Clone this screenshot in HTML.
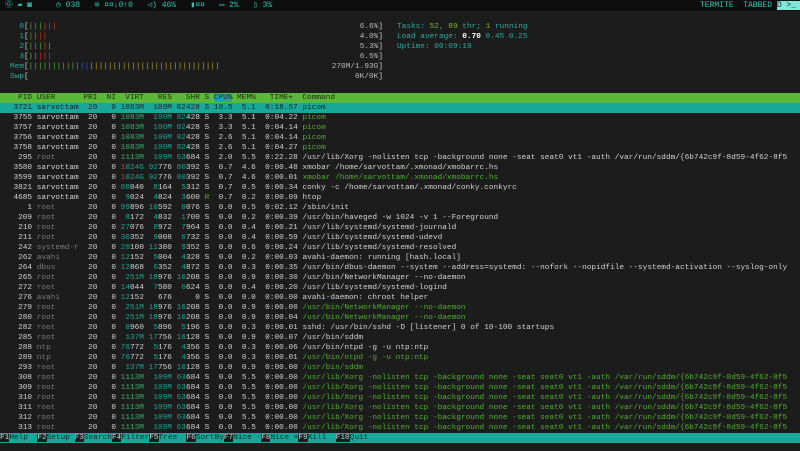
<!DOCTYPE html>
<html><head><meta charset="utf-8"><style>
*{margin:0;padding:0}
body{width:800px;height:451px;background:#1c1c1c;overflow:hidden;position:relative;font-family:"Liberation Mono","DejaVu Sans Mono",monospace;font-size:7.77px;color:#d2d2d2}
.l{position:absolute;white-space:pre;height:10px;line-height:10px}
.m{width:373px}
.m .v2{position:absolute;right:0;top:0;color:#bbb}
.top{position:absolute;left:0;top:0;width:800px;height:11px;background:#0e0e0e;color:#2fc4b2;font-size:8px;line-height:11px;white-space:pre}
.d{color:#7a7a7a}.t{color:#1aa596}.g{color:#3aae6a}.c{color:#4fae2e}.r{color:#d03a2a}.cy{color:#2aa8a0}
.w{color:#fff;font-weight:bold}.y{color:#b8a02a}.b{color:#3060d0}.lg{color:#bbb}.gb{color:#7ab82a}
.hdr{left:0;width:800px;background:#5cb83a;color:#1a2a10}
.sel{left:0;width:800px;background:#17a89a;color:#102020}
.fb span.k{color:#d2d2d2}.fb span.v{background:#17a89a;color:#0c2a28}
</style></head><body>
<div class="top"> <span>⓪ ▰ ◙</span>     ◷ 038   ≋ ¤¤↓0↑0   ◁) 46%   ▮¤¤   ▭ 2%   ▯ 3%</div>
<div class="top" style="left:700px;width:100px;background:none;color:#2fc4b2">TERMITE  TABBED <span style="background:#7fe8d8;color:#123">D &gt;_ </span></div>

<div class="l m" style="left:10px;top:22px">  <span class="cy">0</span>[<span class="c">|||</span><span class="r">|||</span><span class="v2">6.6%<span style="color:#d2d2d2">]</span></span></div>
<div class="l m" style="left:10px;top:32px">  <span class="cy">1</span>[<span class="c">||</span><span class="r">||</span><span class="v2">4.0%<span style="color:#d2d2d2">]</span></span></div>
<div class="l m" style="left:10px;top:42px">  <span class="cy">2</span>[<span class="c">|||</span><span class="r">|</span><span class="y">|</span><span class="v2">5.3%<span style="color:#d2d2d2">]</span></span></div>
<div class="l m" style="left:10px;top:52px">  <span class="cy">3</span>[<span class="c">||</span><span class="r">|||</span><span class="v2">6.5%<span style="color:#d2d2d2">]</span></span></div>
<div class="l m" style="left:10px;top:62px"><span class="cy">Mem</span>[<span class="c">|||||||||||</span><span class="b">||</span><span class="y">||||||||||||||||||||||||||||</span><span class="v2">270M/1.93G<span style="color:#d2d2d2">]</span></span></div>
<div class="l m" style="left:10px;top:72px"><span class="cy">Swp</span>[<span class="v2">0K/0K<span style="color:#d2d2d2">]</span></span></div>
<div class="l cy" style="left:397px;top:22px">Tasks: <span class="gb">52</span>, <span class="gb">89</span> thr; <span class="gb">1</span> running</div>
<div class="l cy" style="left:397px;top:32px">Load average: <span class="w">0.70</span> 0.45 0.25</div>
<div class="l cy" style="left:397px;top:42px">Uptime: 00:09:19</div>

<div class="l hdr" style="top:93px"><span style="padding-left:8.8px">  PID USER      PRI  NI  VIRT   RES   SHR S <span style="background:#1aa6b0">CPU%</span> MEM%   TIME+  Command</span></div>
<div class="l sel" style="top:103px"><span style="padding-left:8.8px"> 3721 sarvottam  20   0 1083M  100M 82428 S 10.5  5.1  0:18.57 picom</span></div>
<div style="position:absolute;left:8.8px;top:113px">
<div class="l" style="position:relative"> 3755 sarvottam  20   0 <span class="g">1083M</span>  <span class="t">100M</span> <span class="t">82</span>428 S  3.3  5.1  0:04.22 <span class="c">picom</span></div>
<div class="l" style="position:relative"> 3757 sarvottam  20   0 <span class="g">1083M</span>  <span class="t">100M</span> <span class="t">82</span>428 S  3.3  5.1  0:04.14 <span class="c">picom</span></div>
<div class="l" style="position:relative"> 3756 sarvottam  20   0 <span class="g">1083M</span>  <span class="t">100M</span> <span class="t">82</span>428 S  2.6  5.1  0:04.14 <span class="c">picom</span></div>
<div class="l" style="position:relative"> 3758 sarvottam  20   0 <span class="g">1083M</span>  <span class="t">100M</span> <span class="t">82</span>428 S  2.6  5.1  0:04.27 <span class="c">picom</span></div>
<div class="l" style="position:relative">  295 <span class="d">root     </span>  20   0 <span class="g">1113M</span>  <span class="t">109M</span> <span class="t">63</span>684 S  2.0  5.5  0:22.28 /usr/lib/Xorg -nolisten tcp -background none -seat seat0 vt1 -auth /var/run/sddm/{6b742c9f-8d59-4f62-8f5</div>
<div class="l" style="position:relative"> 3580 sarvottam  20   0 <span class="r">1</span><span class="t">024G</span> <span class="t">92</span>776 <span class="t">80</span>392 S  0.7  4.6  0:00.48 xmobar /home/sarvottam/.xmonad/xmobarrc.hs</div>
<div class="l" style="position:relative"> 3599 sarvottam  20   0 <span class="r">1</span><span class="t">024G</span> <span class="t">92</span>776 <span class="t">80</span>392 S  0.7  4.6  0:00.01 <span class="c">xmobar /home/sarvottam/.xmonad/xmobarrc.hs</span></div>
<div class="l" style="position:relative"> 3821 sarvottam  20   0 <span class="t">68</span>040  <span class="t">8</span>164  <span class="t">5</span>312 S  0.7  0.5  0:00.34 conky -c /home/sarvottam/.xmonad/conky.conkyrc</div>
<div class="l" style="position:relative"> 4685 sarvottam  20   0  <span class="t">9</span>024  <span class="t">4</span>824  <span class="t">3</span>600 <span class="c">R</span>  0.7  0.2  0:00.09 htop</div>
<div class="l" style="position:relative">    1 <span class="d">root     </span>  20   0 <span class="t">99</span>896 <span class="t">10</span>592  <span class="t">8</span>076 S  0.0  0.5  0:02.12 /sbin/init</div>
<div class="l" style="position:relative">  209 <span class="d">root     </span>  20   0  <span class="t">8</span>172  <span class="t">4</span>832  <span class="t">1</span>700 S  0.0  0.2  0:00.39 /usr/bin/haveged -w 1024 -v 1 --Foreground</div>
<div class="l" style="position:relative">  210 <span class="d">root     </span>  20   0 <span class="t">27</span>076  <span class="t">8</span>972  <span class="t">7</span>964 S  0.0  0.4  0:00.21 /usr/lib/systemd/systemd-journald</div>
<div class="l" style="position:relative">  211 <span class="d">root     </span>  20   0 <span class="t">30</span>352  <span class="t">9</span>008  <span class="t">6</span>732 S  0.0  0.4  0:00.59 /usr/lib/systemd/systemd-udevd</div>
<div class="l" style="position:relative">  242 <span class="d">systemd-r</span>  20   0 <span class="t">20</span>100 <span class="t">11</span>380  <span class="t">9</span>352 S  0.0  0.6  0:00.24 /usr/lib/systemd/systemd-resolved</div>
<div class="l" style="position:relative">  262 <span class="d">avahi    </span>  20   0 <span class="t">12</span>152  <span class="t">5</span>004  <span class="t">4</span>328 S  0.0  0.2  0:00.03 avahi-daemon: running [hash.local]</div>
<div class="l" style="position:relative">  264 <span class="d">dbus     </span>  20   0 <span class="t">12</span>868  <span class="t">6</span>352  <span class="t">4</span>872 S  0.0  0.3  0:00.35 /usr/bin/dbus-daemon --system --address=systemd: --nofork --nopidfile --systemd-activation --syslog-only</div>
<div class="l" style="position:relative">  265 <span class="d">root     </span>  20   0  <span class="t">251M</span> <span class="t">18</span>976 <span class="t">16</span>208 S  0.0  0.9  0:00.30 /usr/bin/NetworkManager --no-daemon</div>
<div class="l" style="position:relative">  272 <span class="d">root     </span>  20   0 <span class="t">14</span>044  <span class="t">7</span>580  <span class="t">6</span>624 S  0.0  0.4  0:00.20 /usr/lib/systemd/systemd-logind</div>
<div class="l" style="position:relative">  276 <span class="d">avahi    </span>  20   0 <span class="t">12</span>152   676     0 S  0.0  0.0  0:00.00 avahi-daemon: chroot helper</div>
<div class="l" style="position:relative">  279 <span class="d">root     </span>  20   0  <span class="t">251M</span> <span class="t">18</span>976 <span class="t">16</span>208 S  0.0  0.9  0:00.00 <span class="c">/usr/bin/NetworkManager --no-daemon</span></div>
<div class="l" style="position:relative">  280 <span class="d">root     </span>  20   0  <span class="t">251M</span> <span class="t">18</span>976 <span class="t">16</span>208 S  0.0  0.9  0:00.04 <span class="c">/usr/bin/NetworkManager --no-daemon</span></div>
<div class="l" style="position:relative">  282 <span class="d">root     </span>  20   0  <span class="t">8</span>960  <span class="t">5</span>896  <span class="t">5</span>196 S  0.0  0.3  0:00.01 sshd: /usr/bin/sshd -D [listener] 0 of 10-100 startups</div>
<div class="l" style="position:relative">  285 <span class="d">root     </span>  20   0  <span class="t">137M</span> <span class="t">17</span>756 <span class="t">16</span>128 S  0.0  0.9  0:00.07 /usr/bin/sddm</div>
<div class="l" style="position:relative">  288 <span class="d">ntp      </span>  20   0 <span class="t">76</span>772  <span class="t">5</span>176  <span class="t">4</span>356 S  0.0  0.3  0:00.06 /usr/bin/ntpd -g -u ntp:ntp</div>
<div class="l" style="position:relative">  289 <span class="d">ntp      </span>  20   0 <span class="t">76</span>772  <span class="t">5</span>176  <span class="t">4</span>356 S  0.0  0.3  0:00.01 <span class="c">/usr/bin/ntpd -g -u ntp:ntp</span></div>
<div class="l" style="position:relative">  293 <span class="d">root     </span>  20   0  <span class="t">137M</span> <span class="t">17</span>756 <span class="t">16</span>128 S  0.0  0.9  0:00.00 <span class="c">/usr/bin/sddm</span></div>
<div class="l" style="position:relative">  308 <span class="d">root     </span>  20   0 <span class="g">1113M</span>  <span class="t">109M</span> <span class="t">63</span>684 S  0.0  5.5  0:00.00 <span class="c">/usr/lib/Xorg -nolisten tcp -background none -seat seat0 vt1 -auth /var/run/sddm/{6b742c9f-8d59-4f62-8f5</span></div>
<div class="l" style="position:relative">  309 <span class="d">root     </span>  20   0 <span class="g">1113M</span>  <span class="t">109M</span> <span class="t">63</span>684 S  0.0  5.5  0:00.00 <span class="c">/usr/lib/Xorg -nolisten tcp -background none -seat seat0 vt1 -auth /var/run/sddm/{6b742c9f-8d59-4f62-8f5</span></div>
<div class="l" style="position:relative">  310 <span class="d">root     </span>  20   0 <span class="g">1113M</span>  <span class="t">109M</span> <span class="t">63</span>684 S  0.0  5.5  0:00.00 <span class="c">/usr/lib/Xorg -nolisten tcp -background none -seat seat0 vt1 -auth /var/run/sddm/{6b742c9f-8d59-4f62-8f5</span></div>
<div class="l" style="position:relative">  311 <span class="d">root     </span>  20   0 <span class="g">1113M</span>  <span class="t">109M</span> <span class="t">63</span>684 S  0.0  5.5  0:00.00 <span class="c">/usr/lib/Xorg -nolisten tcp -background none -seat seat0 vt1 -auth /var/run/sddm/{6b742c9f-8d59-4f62-8f5</span></div>
<div class="l" style="position:relative">  312 <span class="d">root     </span>  20   0 <span class="g">1113M</span>  <span class="t">109M</span> <span class="t">63</span>684 S  0.0  5.5  0:00.00 <span class="c">/usr/lib/Xorg -nolisten tcp -background none -seat seat0 vt1 -auth /var/run/sddm/{6b742c9f-8d59-4f62-8f5</span></div>
<div class="l" style="position:relative">  313 <span class="d">root     </span>  20   0 <span class="g">1113M</span>  <span class="t">109M</span> <span class="t">63</span>684 S  0.0  5.5  0:00.00 <span class="c">/usr/lib/Xorg -nolisten tcp -background none -seat seat0 vt1 -auth /var/run/sddm/{6b742c9f-8d59-4f62-8f5</span></div>
</div>
<div class="l fb" style="left:0;top:433px;width:800px;background:#17a89a"><span style="background:#1c1c1c"><span class="k">F1</span><span class="v">Help  </span><span class="k">F2</span><span class="v">Setup </span><span class="k">F3</span><span class="v">Search</span><span class="k">F4</span><span class="v">Filter</span><span class="k">F5</span><span class="v">Tree  </span><span class="k">F6</span><span class="v">SortBy</span><span class="k">F7</span><span class="v">Nice -</span><span class="k">F8</span><span class="v">Nice +</span><span class="k">F9</span><span class="v">Kill  </span><span class="k">F10</span></span><span style="color:#0c2a28">Quit</span></div>
</body></html>
